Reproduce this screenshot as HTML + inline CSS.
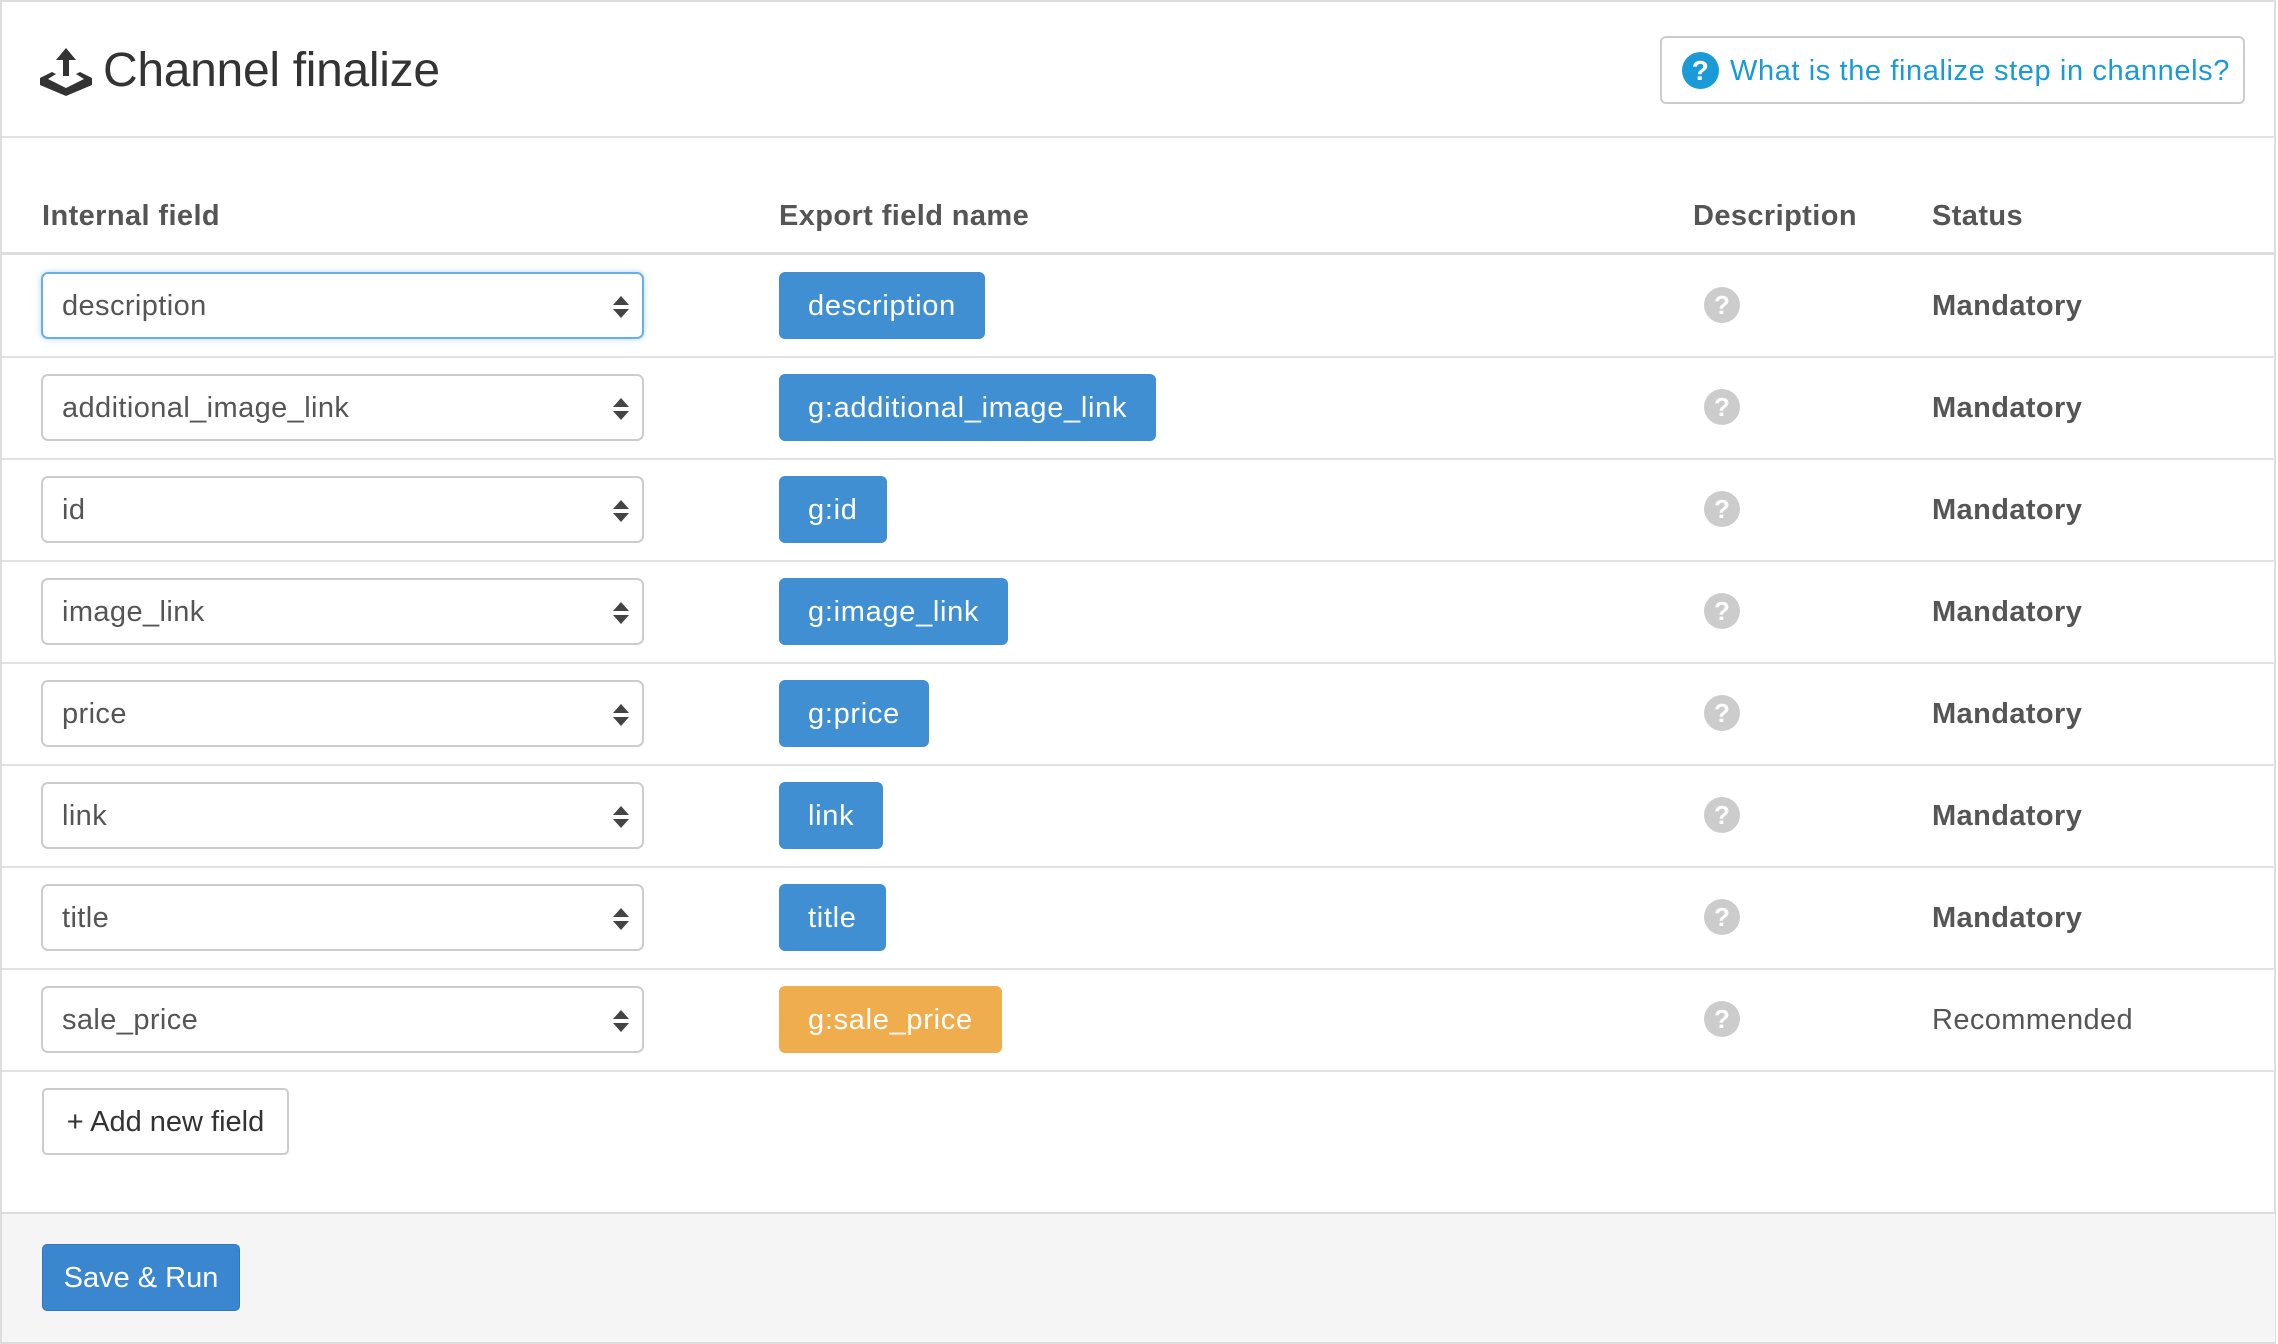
<!DOCTYPE html>
<html><head><meta charset="utf-8"><style>
*{box-sizing:border-box;margin:0;padding:0}
body{width:2278px;height:1344px;background:#fff;font-family:"Liberation Sans",Arial,sans-serif;position:relative;overflow:hidden;letter-spacing:0.4px}
.a{position:absolute}
.frame{left:0;top:0;width:2276px;height:1344px;border:2px solid #ddd;border-top-width:2px}
.title{left:103px;top:43px;font-size:48px;color:#333;font-weight:300;letter-spacing:-0.3px}
.help{left:1660px;top:36px;width:585px;height:68px;border:2px solid #ccc;border-radius:6px}
.help .q{position:absolute;left:20px;top:14px;width:37px;height:37px;border-radius:50%;background:#1a9ad6;color:#fff;font-weight:bold;font-size:28px;text-align:center;line-height:37px}
.help .t{position:absolute;left:68px;top:17px;font-size:29px;color:#1a9ad6;white-space:nowrap;letter-spacing:0.6px}
.hline{left:2px;width:2274px;background:#e2e2e2}
.th{top:200px;font-size:29px;font-weight:bold;color:#555}
.sel{left:41px;width:603px;height:67px;border:2px solid #ccc;border-radius:7px;font-size:29px;color:#555;padding-left:19px;line-height:65px}
.sel.f{border-color:#66afe9;box-shadow:0 0 6px rgba(102,175,233,.5)}
.arr{position:absolute;right:12px;top:22px;width:18px;height:22px}
.badge{left:779px;height:67px;border-radius:6px;background:#3f8fd2;color:#fff;font-size:29px;line-height:69px;padding:0 29px;letter-spacing:0.7px}
.o{background:#efad4e}
.qi{left:1704px;width:36px;height:36px;border-radius:50%;background:#ccc;color:#fff;font-size:26px;font-weight:bold;text-align:center;line-height:36px;letter-spacing:0}
.st{left:1932px;font-size:29px;font-weight:bold;color:#555}
</style></head><body>
<div class="a frame"></div>
<svg class="a" style="left:40px;top:48px" width="52" height="48" viewBox="0 0 52 48"><path d="M26 0 L36 12 L29 12 L29 28 L23 28 L23 12 L16 12 Z" fill="#333"/><path d="M0 30 L12 24 L16 26 L8 31 L26 40 L44 31 L36 26 L40 24 L52 30 L52 37 L26 48 L0 37 Z" fill="#333"/></svg>
<div class="a title">Channel finalize</div>
<div class="a help"><div class="q">?</div><div class="t">What is the finalize step in channels?</div></div>
<div class="a hline" style="top:136px;height:2px"></div>
<div class="a th" style="left:42px">Internal field</div>
<div class="a th" style="left:779px">Export field name</div>
<div class="a th" style="left:1693px">Description</div>
<div class="a th" style="left:1932px">Status</div>
<div class="a hline" style="top:252px;height:3px;background:#ddd"></div>

<div id="rows"></div>
<script>
var d=[["description","description",0,"Mandatory"],["additional_image_link","g:additional_image_link",0,"Mandatory"],["id","g:id",0,"Mandatory"],["image_link","g:image_link",0,"Mandatory"],["price","g:price",0,"Mandatory"],["link","link",0,"Mandatory"],["title","title",0,"Mandatory"],["sale_price","g:sale_price",1,"Recommended"]];
var h="";
for(var i=0;i<d.length;i++){var t=255+i*102;var c=t+50;
h+='<div class="a sel'+(i==0?' f':'')+'" style="top:'+(c-33)+'px">'+d[i][0]+'<svg class="arr" viewBox="0 0 18 22"><path d="M9 0 L17 9 L1 9Z M1 13 L17 13 L9 22Z" fill="#444"/></svg></div>';
h+='<div class="a badge'+(d[i][2]?' o':'')+'" style="top:'+(c-33)+'px">'+d[i][1]+'</div>';
h+='<div class="a qi" style="top:'+(c-18)+'px">?</div>';
h+='<div class="a st" style="top:'+(c-15)+'px;'+(d[i][2]?'font-weight:normal':'')+'">'+d[i][3]+'</div>';
h+='<div class="a hline" style="top:'+(t+101)+'px;height:2px"></div>';}
document.getElementById("rows").innerHTML=h;
</script>
<div class="a" style="left:42px;top:1088px;width:247px;height:67px;border:2px solid #ccc;border-radius:5px;font-size:29px;color:#333;text-align:center;line-height:65px;letter-spacing:0">+ Add new field</div>
<div class="a" style="left:2px;top:1212px;width:2273px;height:130px;background:#f5f5f5;border-top:2px solid #ddd"></div>
<div class="a" style="left:42px;top:1244px;width:198px;height:67px;background:#3a87cf;border:1px solid #2f78bd;border-radius:5px;color:#fff;font-size:29px;text-align:center;line-height:67px;letter-spacing:0">Save &amp; Run</div>
</body></html>
